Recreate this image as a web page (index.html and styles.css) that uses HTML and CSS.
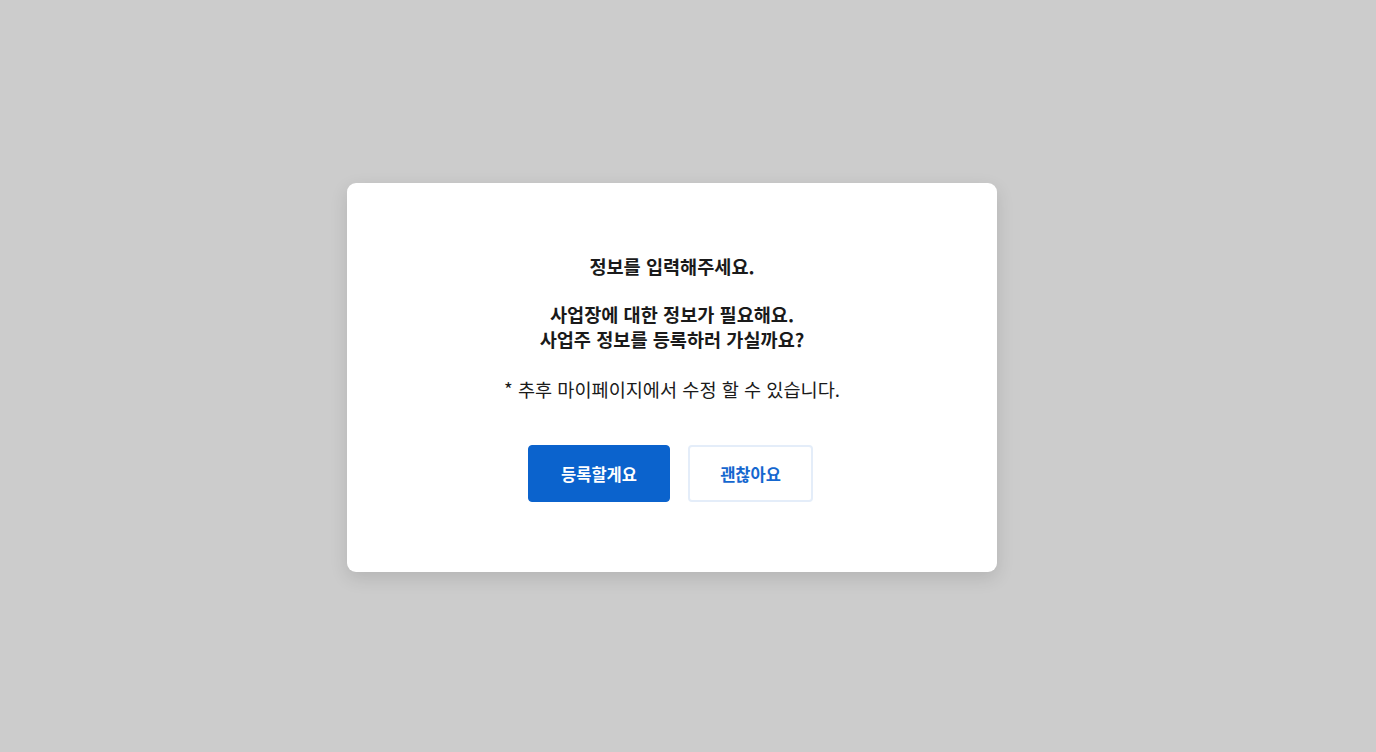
FILE: index.html
```html
<!DOCTYPE html>
<html lang="ko">
	<head>
		<meta charset="UTF-8">
		<title>정보 입력</title>
		<link rel="stylesheet" href="styles.css">
	</head>
	<body>
		<div class="dim">
			<div class="modal">
				<p class="title">정보를 입력해주세요.</p>
				<p class="desc">사업장에 대한 정보가 필요해요.<br>사업주 정보를 등록하러 가실까요?</p>
				<p class="note">* 추후 마이페이지에서 수정 할 수 있습니다.</p>
				<div class="btns">
					<button class="btn btn-primary">등록할게요</button>
					<button class="btn btn-line">괜찮아요</button>
				</div>
			</div>
		</div>
	</body>
</html>
```

FILE: styles.css
```css
*{
	margin: 0;
	padding: 0;
	box-sizing: border-box;
}
html,body{
	height: 100%;
}
body{
	background: #cccccc;
	font-family: "Noto Sans CJK KR", "Noto Sans", sans-serif;
	color: #1a1a1a;
}
.dim{
	height: 100%;
	display: flex;
	align-items: center;
	justify-content: center;
	padding: 3px 32px 0 0;
}
.modal{
	width: 650px;
	background: #fff;
	border-radius: 9px;
	box-shadow: 0 6px 18px rgba(0,0,0,0.12);
	padding: 70px 0 70px;
	text-align: center;
	font-size: 18.6px;
	line-height: 25px;
}
.title{
	font-weight: 700;
	margin-bottom: 23px;
}
.desc{
	font-weight: 700;
}
.note{
	margin-top: 25px;
	font-weight: 400;
}
.btns{
	display: flex;
	justify-content: center;
	gap: 18px;
	margin-top: 44px;
	padding-right: 3px;
}
.btn{
	height: 57px;
	border-radius: 4px;
	font-family: inherit;
	font-size: 16.5px;
	font-weight: 700;
	cursor: pointer;
}
.btn-primary{
	width: 142px;
	background: #0b63cd;
	border: 1px solid #0b63cd;
	color: #fff;
}
.btn-line{
	width: 125px;
	background: #fff;
	border: 2px solid #e4edf9;
	color: #1567cf;
}
```
